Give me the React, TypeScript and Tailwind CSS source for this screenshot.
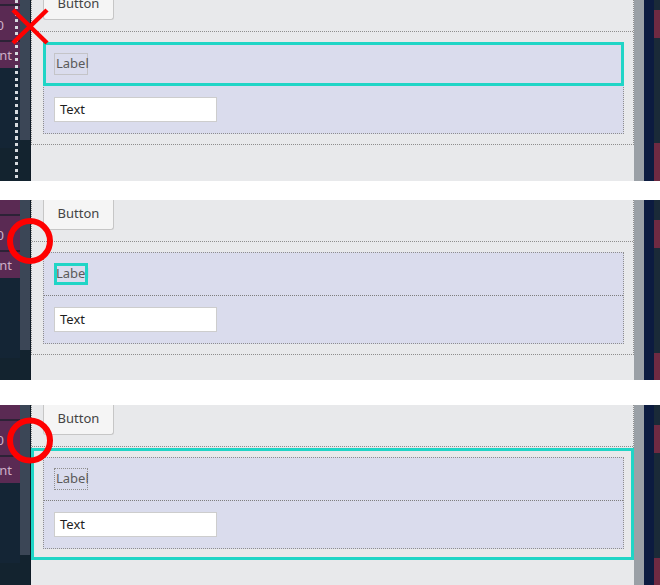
import React from "react";

type Marker = "x" | "circleA" | "circleB";
type Focus = "row" | "label" | "stack";

const font = "font-['Noto_Sans','Open_Sans',sans-serif]";

function Sidebar({ shift, dots }: { shift: string; dots: boolean }) {
  return (
    <div className="relative w-[31px] shrink-0 overflow-hidden bg-[#13232f] border-r border-[#0e1a25]">
      <div className={shift + " flex"}>
        <div className="w-[20px] flex flex-col">
          <div className="h-[14px] bg-[#5a2a53]" />
          <div className="h-[2px] bg-[#2c2236]" />
          <div className={"h-[34px] bg-[#5a2a53] flex items-center justify-end overflow-hidden pr-[16px] text-[13px] leading-none text-[#cfb0c9] whitespace-nowrap " + font}>
            <span className="pt-[5px]">10</span>
          </div>
          <div className="h-[2px] bg-[#2c2236]" />
          <div className={"h-[26px] bg-[#5a2a53] flex items-center justify-end overflow-hidden pr-[8px] text-[13px] leading-none text-[#cfb0c9] whitespace-nowrap " + font}>
            <span className="pt-[1px]">Content</span>
          </div>
          <div className="h-[80px] bg-[#142535]" />
        </div>
        <div className="w-[10px] h-[150px] bg-[#3b4656]" />
      </div>
      {dots && (
        <div className="absolute left-[15px] top-0 bottom-0 w-[3px] bg-[repeating-linear-gradient(to_bottom,#d6dadf_0px,#d6dadf_3px,transparent_3px,transparent_6.5px)]" />
      )}
    </div>
  );
}

function RightRail({ shift }: { shift: string }) {
  return (
    <div className="w-[26px] shrink-0 flex">
      <div className="w-[10px] bg-[#9aa0a6]" />
      <div className="w-[10px] bg-[#0c1b40]" />
      <div className="w-[6px] bg-[#1a2a38] overflow-hidden">
        <div className={shift + " flex flex-col"}>
          <div className="h-[20px]" />
          <div className="h-[28px] bg-[#6f2a42]" />
          <div className="h-[105px]" />
          <div className="h-[60px] bg-[#6f2a42]" />
        </div>
      </div>
    </div>
  );
}

function Teal({ cls }: { cls: string }) {
  return <div className={"absolute border-[3px] border-[#20d5c6] pointer-events-none " + cls} />;
}

function Main({ shift, focus }: { shift: string; focus: Focus }) {
  const labelBorder =
    focus === "stack"
      ? "border border-dotted border-[#8e8e8e]"
      : "border border-[#c4c4c8]";
  return (
    <div className={"flex-1 bg-[#e8e9eb] overflow-hidden " + font}>
      <div className={shift}>
        <div className="h-[155px] border-x border-b border-dotted border-[#8e8e8e] flex flex-col">
          <div className="ml-[11px] w-[71px] h-[30px] shrink-0 bg-[#f5f5f5] border-x border-b border-[#c6c6c6] rounded-b-[3px] flex items-center justify-center text-[13px] text-[#444] leading-none">
            <span className="pb-[2px]">Button</span>
          </div>
          <div className="relative mt-[11px] flex-1 border-t border-dotted border-[#8e8e8e] pt-[10px] pb-[10px]">
            <div className="ml-[11px] mr-[9px] bg-[#dadced] border border-dotted border-[#8e8e8e] flex flex-col">
              <div className="relative h-[43px] border-b border-dotted border-[#7e7e7e] flex items-center pl-[10px]">
                <div className={"relative h-[22px] w-[34px] flex items-center px-[1px] text-[13px] leading-none text-[#5a5a5a] " + labelBorder}>
                  <span className="pb-[1px]">Label</span>
                  {focus === "label" && <Teal cls="-left-[1px] -top-[1px] -right-[1px] -bottom-[1px]" />}
                </div>
                {focus === "row" && <Teal cls="-left-[1px] -top-[1px] -right-[1px] -bottom-[1px]" />}
              </div>
              <div className="h-[47px] pt-[11px] pl-[10px]">
                <div className="w-[163px] h-[25px] bg-white border border-[#cdcdcd] flex items-center pl-[5px] text-[13px] leading-none text-[#1e1e1e]">
                  <span className="pb-[1px]">Text</span>
                </div>
              </div>
            </div>
            {focus === "stack" && <Teal cls="top-[1px] -left-[1px] -right-[1px] -bottom-[1px]" />}
          </div>
        </div>
      </div>
    </div>
  );
}

function MarkerSvg({ marker }: { marker: Marker }) {
  if (marker === "x") {
    return (
      <svg className="absolute left-0 top-0" width="60" height="60" viewBox="0 0 60 60">
        <line x1="13" y1="10" x2="47" y2="43" stroke="#ff0000" strokeWidth="4.5" />
        <line x1="47" y1="10" x2="13" y2="43" stroke="#ff0000" strokeWidth="4.5" />
      </svg>
    );
  }
  const cy = marker === "circleA" ? 41 : 35.5;
  return (
    <svg className="absolute left-0 top-0" width="70" height="80" viewBox="0 0 70 80">
      <circle cx="30" cy={cy} r="20" fill="none" stroke="#ff0000" strokeWidth="6" />
    </svg>
  );
}

function Panel({
  h,
  shift,
  dots,
  focus,
  marker,
}: {
  h: string;
  shift: string;
  dots: boolean;
  focus: Focus;
  marker: Marker;
}) {
  return (
    <div className={"relative flex overflow-hidden " + h}>
      <Sidebar shift={shift} dots={dots} />
      <Main shift={shift} focus={focus} />
      <RightRail shift={shift} />
      <MarkerSvg marker={marker} />
    </div>
  );
}

export default function App() {
  return (
    <div className="w-[660px] h-[585px] bg-white flex flex-col overflow-hidden">
      <Panel h="h-[181px]" shift="-mt-[10px]" dots={true} focus="row" marker="x" />
      <div className="h-[19px] bg-white" />
      <Panel h="h-[180px]" shift="mt-0" dots={false} focus="label" marker="circleA" />
      <div className="h-[25px] bg-white" />
      <Panel h="h-[180px]" shift="mt-0" dots={false} focus="stack" marker="circleB" />
    </div>
  );
}
